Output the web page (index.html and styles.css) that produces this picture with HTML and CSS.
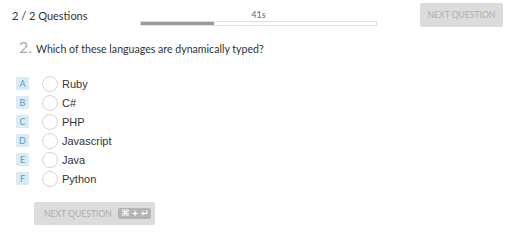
FILE: index.html
```html
<!DOCTYPE html>
<html lang="en">

<head>
    <meta charset="UTF-8" />
    <title>Quiz</title>
    <link rel="stylesheet" href="styles.css">
</head>

<body>
    <div class="top">
        <div class="count">2 / 2 Questions</div>
        <div class="timer">
            <div class="time">41s</div>
            <div class="track"><div class="fill" style="width: 31%;"></div></div>
        </div>
        <button class="next top-next">NEXT QUESTION</button>
    </div>

    <div class="question">
        <span class="num">2.</span>
        <span class="text">Which of these languages are dynamically typed?</span>
    </div>

    <ul class="options">
        <li><span class="key">A</span><span class="radio"></span><span class="label">Ruby</span></li>
        <li><span class="key">B</span><span class="radio"></span><span class="label">C#</span></li>
        <li><span class="key">C</span><span class="radio"></span><span class="label">PHP</span></li>
        <li><span class="key">D</span><span class="radio"></span><span class="label">Javascript</span></li>
        <li><span class="key">E</span><span class="radio"></span><span class="label">Java</span></li>
        <li><span class="key">F</span><span class="radio"></span><span class="label">Python</span></li>
    </ul>

    <button class="next bottom-next">NEXT QUESTION <span class="kbd">&#8984; + &#8629;</span></button>
</body>

</html>
```

FILE: styles.css
```css
body {
    margin: 0;
    font-family: Lato, "Open Sans", sans-serif;
    color: #333;
    background: #fff;
}

.top {
    display: flex;
    align-items: flex-start;
    padding: 3px 16px 0 12px;
    height: 25px;
}

.count {
    font-size: 11px;
    width: 128px;
    padding-top: 6px;
}

.timer {
    width: 237px;
    display: flex;
    flex-direction: column;
    align-items: center;
}

.time {
    font-size: 9px;
    color: #666;
    padding-top: 6px;
    height: 12px;
}

.track {
    width: 235px;
    height: 3px;
    border: 1px solid #e2e2e2;
    background: #fff;
}

.fill {
    height: 100%;
    background: #999;
}

.next {
    border: none;
    border-radius: 2px;
    background: #dcdcdc;
    color: #afafaf;
    font-family: Lato, "Open Sans", sans-serif;
    font-size: 8.6px;
    padding: 0;
}

.top-next {
    margin-left: auto;
    width: 83px;
    height: 24px;
}

.question {
    display: flex;
    align-items: baseline;
    padding: 9px 0 0 19px;
}

.num {
    font-size: 16px;
    color: #aaa;
    width: 17px;
}

.text {
    font-size: 10.6px;
}

.options {
    list-style: none;
    margin: 0;
    padding: 18px 0 0 16px;
    font-family: "Liberation Sans", Arial, sans-serif;
    font-size: 11px;
}

.options li {
    display: flex;
    align-items: center;
    height: 19px;
}

.key {
    width: 13px;
    height: 13px;
    background: #d9ebf5;
    color: #5c9cc2;
    font-family: Lato, sans-serif;
    font-size: 9px;
    display: flex;
    align-items: center;
    justify-content: center;
}

.radio {
    width: 14px;
    height: 14px;
    border: 1px solid #d4d4d4;
    border-radius: 50%;
    margin-left: 13px;
}

.label {
    margin-left: 4px;
    color: #333;
}

.bottom-next {
    margin: 14px 0 0 34px;
    width: 121px;
    height: 23px;
    display: flex;
    align-items: center;
    padding-left: 10px;
}

.kbd {
    margin-left: 6px;
    background: #b4b4b4;
    color: #fff;
    border-radius: 2px;
    font-family: "DejaVu Sans", sans-serif;
    font-size: 9px;
    font-weight: bold;
    line-height: 11px;
    padding: 0 3px;
    letter-spacing: -0.5px;
}
```
